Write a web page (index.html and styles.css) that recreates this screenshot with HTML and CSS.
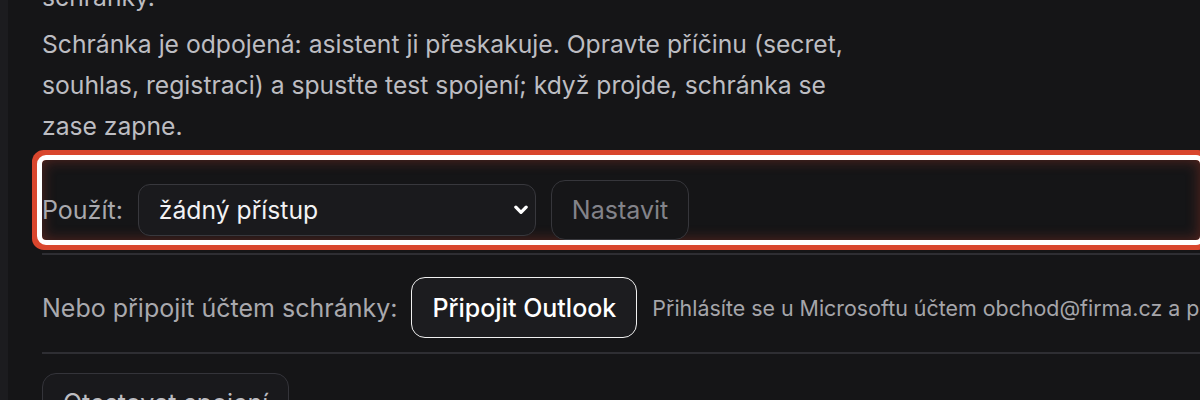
FILE: index.html
```html
<!DOCTYPE html>
<html lang="cs">
<head>
<meta charset="utf-8">
<title>Schránka</title>
<link rel="stylesheet" href="styles.css">
</head>
<body>
<div class="rail"></div>
<main class="panel">
  <p class="para prev">schránky.</p>
  <p class="para">Schránka je odpojená: asistent ji přeskakuje. Opravte příčinu (secret, souhlas, registraci) a spusťte test spojení; když projde, schránka se zase zapne.</p>
  <div class="row highlight">
    <span class="label">Použít:</span>
    <div class="select-wrap">
      <select class="select">
        <option>žádný přístup</option>
      </select>
      <svg class="chev" viewBox="0 0 12 8" width="14" height="10"><path d="M1.6 1.6 L6 6 L10.4 1.6" fill="none" stroke="#fff" stroke-width="2.8" stroke-linecap="round" stroke-linejoin="round"/></svg>
    </div>
    <button class="btn btn-disabled">Nastavit</button>
  </div>
  <hr class="sep">
  <div class="row oauth">
    <span class="label">Nebo připojit účtem schránky:</span>
    <button class="btn btn-primary">Připojit Outlook</button>
    <span class="hint">Přihlásíte se u Microsoftu účtem obchod@firma.cz a povolíte přístup.</span>
  </div>
  <hr class="sep">
  <div class="row test">
    <button class="btn btn-plain">Otestovat spojení</button>
  </div>
</main>
</body>
</html>
```
FILE: styles.css
```css
html, body {
  margin: 0;
  padding: 0;
  height: 100%;
  overflow: hidden;
}
body {
  background: #1c1c1f;
  font-family: Inter, "Noto Sans", sans-serif;
  display: flex;
}
.rail {
  width: 8px;
  flex: none;
  background: #1c1c1f;
}
.panel {
  flex: 1;
  min-width: 0;
  background: #151517;
  padding: 0 0 0 34px;
  margin-top: -23px;
  overflow: hidden;
}
.para {
  margin: 0;
  font-size: 24.7px;
  line-height: 41px;
  color: #bdbdc2;
  max-width: 830px;
}
.prev {
  margin-bottom: 6px;
}
.row {
  display: flex;
  align-items: center;
  white-space: nowrap;
}
.highlight {
  margin-top: 13px;
  height: 80px;
  padding-top: 20px;
  box-sizing: border-box;
  gap: 15px;
  outline: 5px solid #ffffff;
  border-radius: 4px;
  box-shadow: 0 0 0 10px #d9462d, inset 0 0 14px rgba(217, 70, 45, 0.35);
}
.label {
  font-size: 25px;
  color: #a9a9ae;
}
.select-wrap {
  position: relative;
  width: 398px;
  flex: none;
}
.select {
  appearance: none;
  -webkit-appearance: none;
  display: block;
  width: 100%;
  height: 52px;
  box-sizing: border-box;
  background: #1a1a1d;
  border: 1px solid #38383d;
  border-radius: 12px;
  color: #f2f2f4;
  font-family: Inter, sans-serif;
  font-size: 24.7px;
  padding: 0 40px 0 20px;
}
.chev {
  position: absolute;
  right: 8px;
  top: 21px;
}
.btn {
  font-family: Inter, sans-serif;
  font-size: 25px;
  border-radius: 14px;
  box-sizing: border-box;
  padding: 0 20px;
  cursor: pointer;
  flex: none;
}
.btn-disabled {
  height: 60px;
  background: #161618;
  border: 1px solid #36363b;
  color: #83838a;
}
.sep {
  border: 0;
  border-top: 2px solid #2e2e33;
  margin: 13px 0 0;
}
.oauth {
  padding: 22px 0 14px;
  gap: 14px;
}
.btn-primary {
  height: 61px;
  background: #1c1c1f;
  border: 1.5px solid #f0f0f0;
  color: #ffffff;
  font-weight: 500;
}
.hint {
  font-size: 21.4px;
  color: #a5a5aa;
  margin-left: 1px;
}
.oauth + .sep {
  margin-top: 0;
}
.test {
  padding-top: 19px;
}
.btn-plain {
  height: 60px;
  background: #19191c;
  border: 1px solid #34343a;
  color: #bdbdc2;
}
```
